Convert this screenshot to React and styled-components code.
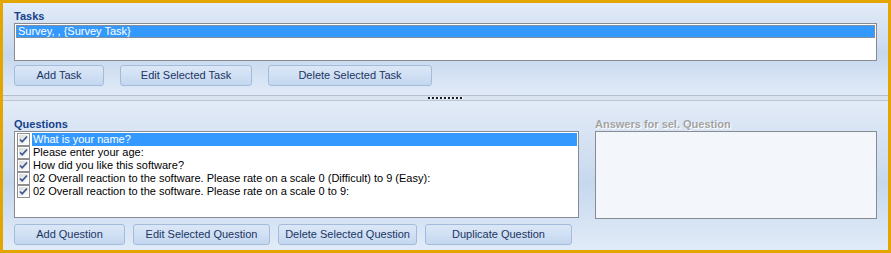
import React from 'react';
import styled, { createGlobalStyle } from 'styled-components';

const GlobalStyle = createGlobalStyle`
  html, body {
    margin: 0;
    padding: 0;
    background: #ffffff;
  }
  body {
    font-family: "Liberation Sans", Arial, sans-serif;
    font-size: 11px;
  }
`;

const Frame = styled.div`
  width: 891px;
  height: 253px;
  box-sizing: border-box;
  border: 3px solid #e3a600;
  display: flex;
  flex-direction: column;
  background: #dfe9f6;
`;

const Panel = styled.div`
  box-sizing: border-box;
  height: ${(p) => p.$height}px;
  padding: ${(p) => p.$padTop}px 11px 0 11px;
  background: linear-gradient(
    to bottom,
    #e2ebf7 0%,
    #cddcf0 45%,
    #c6d8ee 55%,
    #e1ebf8 100%
  );
`;

const Label = styled.div`
  font-weight: bold;
  font-size: 11px;
  line-height: 13px;
  height: 13px;
  color: ${(p) => (p.$disabled ? '#a3a3a3' : '#15428b')};
  text-shadow: ${(p) => (p.$disabled ? '1px 1px 0 #ffffff' : 'none')};
  white-space: nowrap;
`;

const ListBox = styled.div`
  box-sizing: border-box;
  height: ${(p) => p.$height}px;
  border: 1px solid #878b92;
  background: ${(p) => (p.$muted ? '#f3f6fb' : '#ffffff')};
  padding: 1px;
  overflow: hidden;
`;

const TaskRow = styled.div`
  box-sizing: border-box;
  height: 13px;
  line-height: 11px;
  padding-left: 1px;
  background: #3399ff;
  color: #ffffff;
  border: 1px dotted #c8864a;
  white-space: nowrap;
`;

const QuestionRow = styled.div`
  display: flex;
  align-items: center;
  height: 13px;
`;

const Box = styled.span`
  flex: none;
  width: 13px;
  height: 13px;
  margin-left: 1px;
  margin-right: 2px;
  display: flex;
  align-items: center;
  justify-content: center;
`;

const RowText = styled.span`
  flex: 1;
  height: 13px;
  line-height: 13px;
  padding-left: 1px;
  white-space: nowrap;
  color: ${(p) => (p.$selected ? '#ffffff' : '#000000')};
  background: ${(p) => (p.$selected ? '#3399ff' : 'transparent')};
`;

const ButtonRow = styled.div`
  display: flex;
  gap: ${(p) => p.$gap}px;
  margin-top: ${(p) => p.$top}px;
`;

const Button = styled.button`
  box-sizing: border-box;
  width: ${(p) => p.$w}px;
  height: 21px;
  padding: 0;
  border: 1px solid #a4bcdc;
  border-radius: 3px;
  background: linear-gradient(to bottom, #dbe7f6 0%, #d0e0f4 50%, #c4d7ef 100%);
  color: #1b3563;
  font-family: "Liberation Sans", Arial, sans-serif;
  font-size: 11px;
  line-height: 19px;
  cursor: pointer;
`;

const Splitter = styled.div`
  box-sizing: border-box;
  height: 6px;
  border-top: 1px solid #b6bfcc;
  border-bottom: 1px solid #bcc5d2;
  background: #dae4f1;
  display: flex;
  justify-content: center;
  align-items: center;
`;

const Grip = styled.div`
  width: 36px;
  height: 2px;
  margin-left: 1px;
  background: repeating-linear-gradient(
    90deg,
    #1a1a1a 0 2px,
    #ffffff 2px 3px,
    transparent 3px 4px
  );
`;

const Columns = styled.div`
  display: grid;
  grid-template-columns: 565px 282px;
  column-gap: 16px;
`;

const Column = styled.div`
  display: flex;
  flex-direction: column;
`;

const Check = () => (
  <svg width="13" height="13" viewBox="0 0 13 13">
    <defs>
      <linearGradient id="cbg" x1="0" y1="0" x2="1" y2="1">
        <stop offset="0" stopColor="#d9d9d9" />
        <stop offset="1" stopColor="#ffffff" />
      </linearGradient>
    </defs>
    <rect x="0.5" y="0.5" width="12" height="12" fill="#fdfdfd" stroke="#8f8f8f" />
    <rect x="2" y="2" width="9" height="9" fill="url(#cbg)" />
    <path d="M3 6.5 L5.2 8.8 L10 3.5" fill="none" stroke="#3c5a90" strokeWidth="1.8" />
  </svg>
);

const questions = [
  'What is your name?',
  'Please enter your age:',
  'How did you like this software?',
  '02 Overall reaction to the software. Please rate on a scale 0 (Difficult) to 9 (Easy):',
  '02 Overall reaction to the software. Please rate on a scale 0 to 9:',
];

export default function App() {
  return (
    <>
      <GlobalStyle />
      <Frame>
        <Panel $height={92} $padTop={7}>
          <Label>Tasks</Label>
          <ListBox $height={38}>
            <TaskRow>Survey, , {'{Survey Task}'}</TaskRow>
          </ListBox>
          <ButtonRow $gap={16} $top={4}>
            <Button $w={90}>Add Task</Button>
            <Button $w={132}>Edit Selected Task</Button>
            <Button $w={164}>Delete Selected Task</Button>
          </ButtonRow>
        </Panel>
        <Splitter>
          <Grip />
        </Splitter>
        <Panel $height={148} $padTop={17}>
          <Columns>
            <Column>
              <Label>Questions</Label>
              <ListBox $height={87}>
                {questions.map((q, i) => (
                  <QuestionRow key={i}>
                    <Box>
                      <Check />
                    </Box>
                    <RowText $selected={i === 0}>{q}</RowText>
                  </QuestionRow>
                ))}
              </ListBox>
            </Column>
            <Column>
              <Label $disabled>Answers for sel. Question</Label>
              <ListBox $height={88} $muted />
            </Column>
          </Columns>
          <ButtonRow $gap={8} $top={5}>
            <Button $w={111}>Add Question</Button>
            <Button $w={137}>Edit Selected Question</Button>
            <Button $w={139}>Delete Selected Question</Button>
            <Button $w={147}>Duplicate Question</Button>
          </ButtonRow>
        </Panel>
      </Frame>
    </>
  );
}
